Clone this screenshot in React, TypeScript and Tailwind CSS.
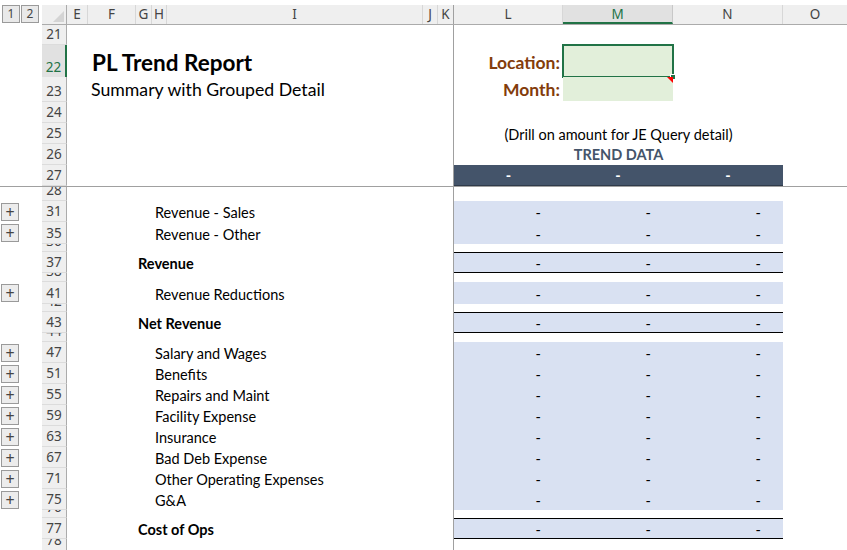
import React from "react";

const cellFont = { fontFamily: "Lato, 'Liberation Sans', sans-serif" };
const hdrFont = { fontFamily: "'Noto Sans', 'Open Sans', sans-serif" };

type RowProps = {
  num: number;
  h: string;
  btn?: boolean;
  selected?: boolean;
  left?: React.ReactNode;
  right?: React.ReactNode;
};

function PlusBtn() {
  return (
    <div className="flex h-[18px] w-[18px] items-center justify-center border border-[#9a9a9a] bg-[#ececec] text-[16px] leading-none text-[#444]">
      +
    </div>
  );
}

function Row({ num, h, btn, selected, left, right }: RowProps) {
  return (
    <div className={`flex ${h}`}>
      <div className="flex w-[42px] items-center pl-[1px]">{btn && <PlusBtn />}</div>
      <div
        className={
          selected
            ? "flex w-[25px] items-end justify-center overflow-hidden border-r-2 border-r-[#217346] bg-[#e1e1e1] text-[13.5px] leading-[19px] text-[#217346]"
            : "flex w-[25px] items-end justify-center overflow-hidden border-r border-b border-r-[#ababab] border-b-[#dcdcdc] bg-[#efefef] text-[13.5px] leading-[19px] text-[#444]"
        }
        style={hdrFont}
      >
        {num}
      </div>
      <div className="flex w-[386px] items-center overflow-visible whitespace-nowrap" style={cellFont}>
        {left}
      </div>
      <div className="w-px bg-[#a0a0a0]" />
      <div className="flex w-[329px]" style={cellFont}>
        {right}
      </div>
      <div className="flex-1" />
    </div>
  );
}

function Dashes({ total }: { total?: boolean }) {
  return (
    <div
      className={`flex w-full bg-[#d9e1f2] text-[14.5px] text-black ${total ? "border-y border-black" : ""}`}
    >
      <div className="flex w-[109px] items-center justify-end pt-[3px] pr-[22px]">-</div>
      <div className="flex w-[110px] items-center justify-end pt-[3px] pr-[22px]">-</div>
      <div className="flex w-[110px] items-center justify-end pt-[3px] pr-[22px]">-</div>
    </div>
  );
}

function Label({ text, bold }: { text: string; bold?: boolean }) {
  return bold ? (
    <span className="pt-[3px] pl-[71px] text-[14.5px] font-bold text-black">{text}</span>
  ) : (
    <span className="pt-[3px] pl-[88px] text-[14.5px] text-black">{text}</span>
  );
}

const detail: [number, string][] = [
  [47, "Salary and Wages"],
  [51, "Benefits"],
  [55, "Repairs and Maint"],
  [59, "Facility Expense"],
  [63, "Insurance"],
  [67, "Bad Deb Expense"],
  [71, "Other Operating Expenses"],
  [75, "G&A"],
];

function HeaderRow() {
  return (
    <div className="flex h-[25px] pt-[5px]" style={hdrFont}>
      <div className="flex w-[42px] gap-[1px] pl-[2px]">
        <div className="flex h-[18px] w-[18px] items-center justify-center border border-[#9a9a9a] bg-[#e9e9e9] text-[12px] text-[#444]">1</div>
        <div className="flex h-[18px] w-[18px] items-center justify-center border border-[#9a9a9a] bg-[#e9e9e9] text-[12px] text-[#444]">2</div>
      </div>
      <div className="flex flex-1 border-b border-[#ababab] bg-[#efefef] text-[13.5px] leading-[19px] text-[#444]">
        <div className="flex w-[25px] items-end justify-end border-r border-[#ababab] p-[2px]">
          <svg width="11" height="11" viewBox="0 0 11 11">
            <polygon points="11,0 11,11 0,11" fill="#d4d4d4" />
          </svg>
        </div>
        <div className="w-[21px] border-r border-[#d7d7d7] text-center">E</div>
        <div className="w-[48px] border-r border-[#d7d7d7] text-center">F</div>
        <div className="w-[16px] border-r border-[#d7d7d7] text-center">G</div>
        <div className="w-[15px] border-r border-[#d7d7d7] text-center">H</div>
        <div className="w-[256px] border-r border-[#d7d7d7] text-center">I</div>
        <div className="w-[15px] border-r border-[#d7d7d7] text-center">J</div>
        <div className="w-[15px] text-center">K</div>
        <div className="w-px bg-[#a0a0a0]" />
        <div className="w-[109px] border-r border-[#d7d7d7] text-center">L</div>
        <div className="w-[110px] border-b-2 border-r border-b-[#217346] border-r-[#c8c8c8] bg-[#e1e1e1] text-center text-[#217346]">M</div>
        <div className="w-[110px] border-r border-[#d7d7d7] text-center">N</div>
        <div className="flex-1 text-center">O</div>
      </div>
    </div>
  );
}

export default function App() {
  return (
    <div className="h-[550px] w-[847px] overflow-hidden bg-white">
      <HeaderRow />

      <Row num={21} h="h-[20px]" />
      <Row
        num={22}
        h="h-[32px]"
        selected
        left={<span className="pl-[25px] pt-[4px] text-[22.5px] font-bold text-black">PL Trend Report</span>}
        right={
          <>
            <div className="flex w-[109px] items-end justify-end pb-[1px] pr-[3px] text-[17.5px] font-bold text-[#833c0b]">Location:</div>
            <div className="relative w-[110px] bg-[#e2efda]">
              <div className="absolute -top-[1px] -left-[1px] h-[34px] w-[112px] border-2 border-[#217346]" />
              <div className="absolute -right-[3px] -bottom-[3px] h-[6px] w-[6px] border border-white bg-[#217346]" />
            </div>
          </>
        }
      />
      <Row
        num={23}
        h="h-[25px]"
        left={<span className="pl-[24px] pt-[1px] text-[17.7px] text-black">Summary with Grouped Detail</span>}
        right={
          <>
            <div className="flex w-[109px] items-center justify-end pt-[1px] pr-[3px] text-[17.5px] font-bold text-[#833c0b]">Month:</div>
            <div className="relative mb-[1px] w-[110px] bg-[#e2efda]">
              <svg className="absolute top-0 right-0" width="6" height="6" viewBox="0 0 6 6">
                <polygon points="0,0 6,0 6,6" fill="#ff0000" />
              </svg>
            </div>
          </>
        }
      />
      <Row num={24} h="h-[21px]" />
      <Row
        num={25}
        h="h-[21px]"
        right={<div className="flex w-full items-center justify-center pt-[2px] text-[14.5px] text-black">(Drill on amount for JE Query detail)</div>}
      />
      <Row
        num={26}
        h="h-[21px]"
        right={<div className="flex w-full items-center justify-center pt-[1px] text-[14.5px] font-bold text-[#44546a]">TREND DATA</div>}
      />
      <Row
        num={27}
        h="h-[21px]"
        right={
          <div className="flex w-full border-b border-[#2f3a4a] bg-[#44546a] text-[14.5px] font-bold text-white">
            <div className="flex w-[109px] items-center justify-center pt-[2px]">-</div>
            <div className="flex w-[110px] items-center justify-center pt-[2px]">-</div>
            <div className="flex w-[110px] items-center justify-center pt-[2px]">-</div>
          </div>
        }
      />

      <div className="h-px w-full bg-[#a0a0a0]" />

      <Row num={28} h="h-[14px]" />
      <Row num={31} h="h-[21px]" btn left={<Label text="Revenue - Sales" />} right={<Dashes />} />
      <Row num={35} h="h-[22px]" btn left={<Label text="Revenue - Other" />} right={<Dashes />} />
      <Row num={36} h="h-[8px]" />
      <Row num={37} h="h-[21px]" left={<Label text="Revenue" bold />} right={<Dashes total />} />
      <Row num={38} h="h-[9px]" />
      <Row num={41} h="h-[22px]" btn left={<Label text="Revenue Reductions" />} right={<Dashes />} />
      <Row num={42} h="h-[8px]" />
      <Row num={43} h="h-[21px]" left={<Label text="Net Revenue" bold />} right={<Dashes total />} />
      <Row num={44} h="h-[9px]" />
      {detail.map(([n, t]) => (
        <Row key={n} num={n} h="h-[21px]" btn left={<Label text={t} />} right={<Dashes />} />
      ))}
      <Row num={76} h="h-[8px]" />
      <Row num={77} h="h-[21px]" left={<Label text="Cost of Ops" bold />} right={<Dashes total />} />
      <Row num={78} h="h-[12px]" />
    </div>
  );
}
